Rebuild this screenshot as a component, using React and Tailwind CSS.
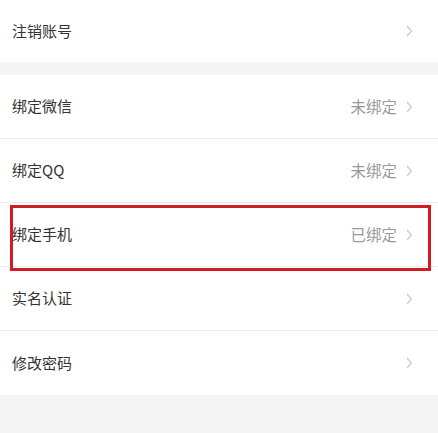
import React from "react";

const font = { fontFamily: '"Noto Sans CJK SC", "Noto Sans", sans-serif' };

function Chevron() {
  return (
    <svg width="7" height="12" viewBox="0 0 7 12" className="shrink-0">
      <path d="M1 1 L5.5 6 L1 11" fill="none" stroke="#c9c9c9" strokeWidth="1.2" />
    </svg>
  );
}

function Row({ label, value, border = true, highlight = false, h = "h-[63px]" }) {
  return (
    <div className={`relative bg-white ${border ? "border-b border-[#ededed]" : ""}`}>
      <div className={`flex items-center justify-between pl-3 pr-[25px] ${h}`}>
        <span className="text-[15px] text-[#333333]">{label}</span>
        <div className="flex items-center gap-[9px]">
          {value && <span className="text-[15.5px] text-[#9a9a9a]">{value}</span>}
          <Chevron />
        </div>
      </div>
      {highlight && (
        <div className="absolute z-10 left-[10px] top-[2px] w-[421px] h-[66px] border-[3px] border-[#d01c22]" />
      )}
    </div>
  );
}

export default function App() {
  return (
    <div className="w-[438px] h-[433px] bg-[#f5f5f5] overflow-hidden" style={font}>
      <Row label="注销账号" border={false} h="h-[62px]" />
      <div className="h-[13px] bg-[#f4f4f4]" />
      <Row label="绑定微信" value="未绑定" />
      <Row label="绑定QQ" value="未绑定" />
      <Row label="绑定手机" value="已绑定" highlight />
      <Row label="实名认证" />
      <Row label="修改密码" border={false} h="h-[64px]" />
    </div>
  );
}
